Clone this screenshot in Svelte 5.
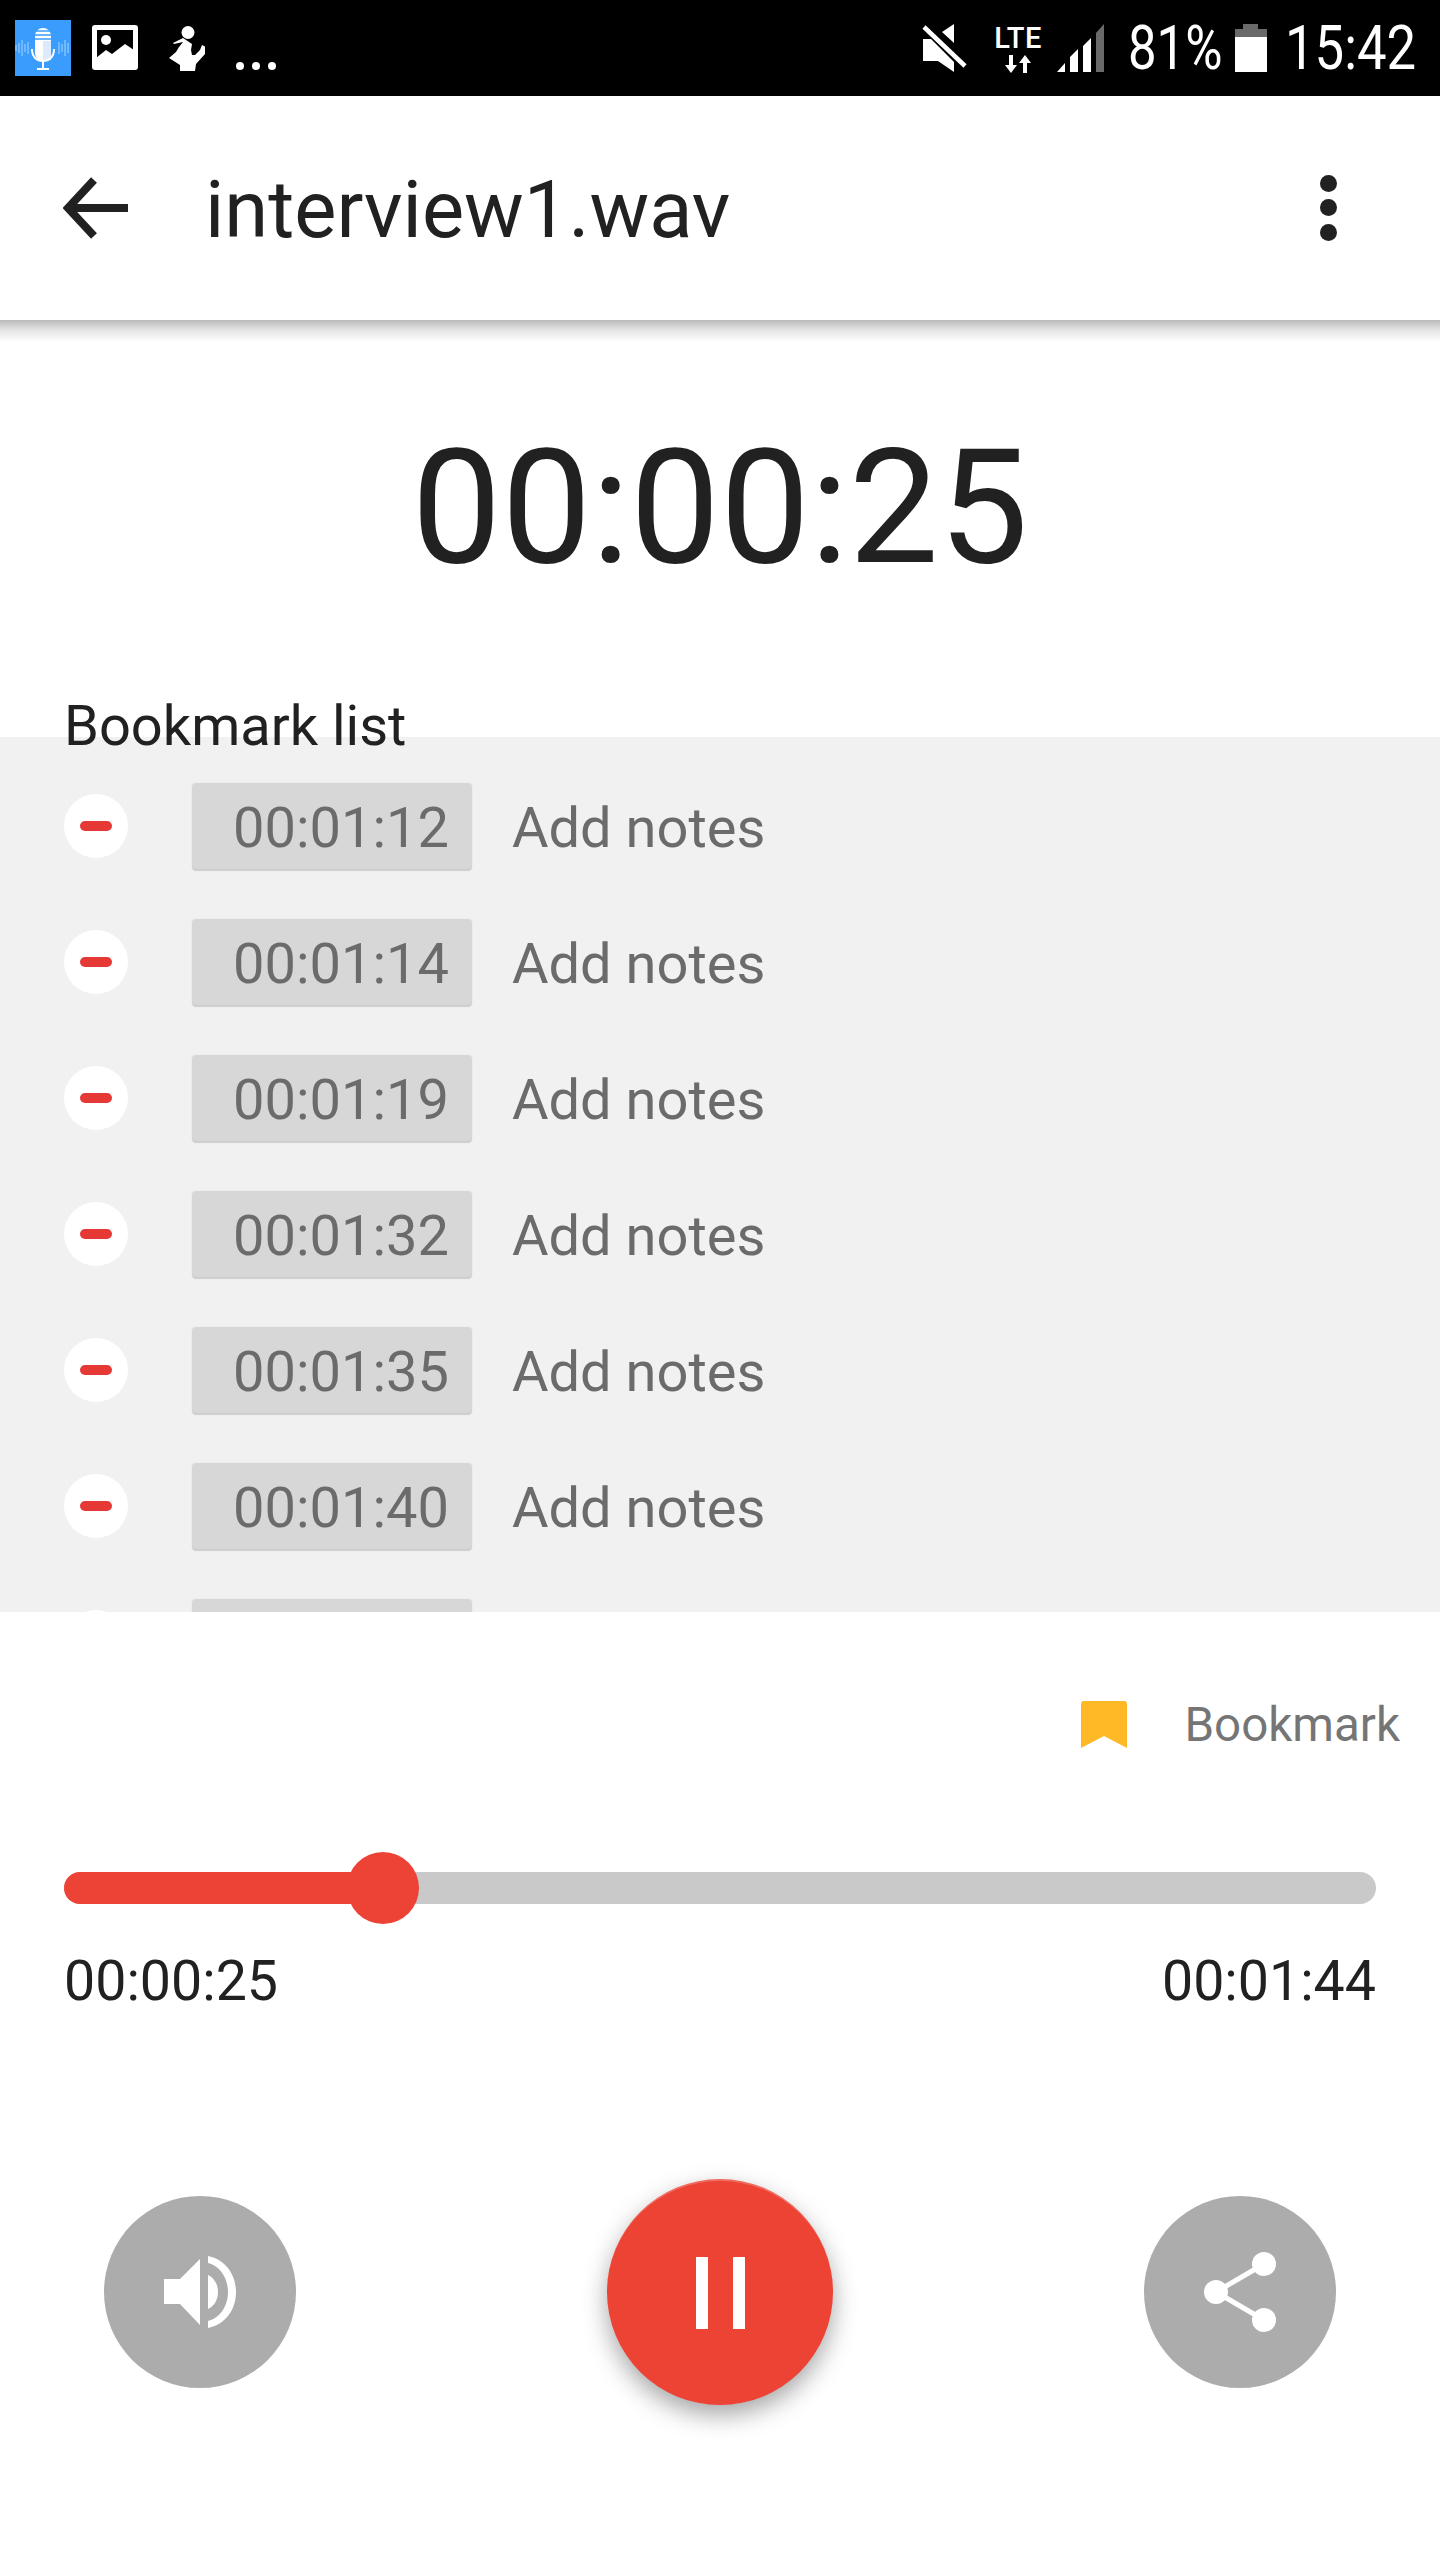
<script>
	const marks = ['00:01:12', '00:01:14', '00:01:19', '00:01:32', '00:01:35', '00:01:40', ''];
</script>

<div class="screen">
	<div class="status">
		<div class="notif">
			<svg class="mic" width="56" height="56" viewBox="0 0 56 56">
				<rect width="56" height="56" fill="#3a9dfd" />
				<path d="M1 25v6M4 23v10M7 20v16M10 24v8M13 22v12M44 22v12M47 24v8M50 20v16M53 23v10" stroke="#a9d3fd" stroke-width="1" />
				<path d="M20 16a8 8 0 0 1 16 0v17a8 8 0 0 1-16 0z" fill="#fff" />
				<path d="M20 11h16M20 15h16M20 19h16" stroke="#3a9dfd" stroke-width="1.4" />
				<rect x="28" y="21" width="8" height="19" fill="#dbeafc" />
				<path d="M17 29c0 8 5 12 11 12s11-4 11-12" fill="none" stroke="#fff" stroke-width="2" />
				<path d="M28 41v8M22 49h12" stroke="#fff" stroke-width="2" />
			</svg>
			<svg class="pic" width="46" height="45" viewBox="0 0 46 45">
				<rect width="46" height="45" rx="3" fill="#fff" />
				<rect x="5" y="5" width="36" height="29" fill="#000" />
				<circle cx="14" cy="15" r="5" fill="#fff" />
				<path d="M4 33l10-8 6 4 13-10 9 6v12H4z" fill="#fff" />
			</svg>
			<svg class="runner" width="36" height="46" viewBox="0 0 36 46">
				<circle cx="19" cy="7.5" r="6.5" fill="#fff" />
				<path d="M14 13L4 18l1 1 9-2-4 5-3 5-7 6 11 7v6h15l1-7 9-10 1-7-4-2-2 5-5 5-3 0-1-5 1-6z" fill="#fff" />
			</svg>
			<div class="dots"><i></i><i></i><i></i></div>
		</div>
		<div class="system">
			<svg class="mute" width="45" height="48" viewBox="0 0 45 48">
				<path d="M32 0v19L20 8zM1 15h8l23 23v10L16 37H1z" fill="#fff" />
				<path d="M2 3l41 39" stroke="#fff" stroke-width="4.5" />
			</svg>
			<div class="lte">
				<span>LTE</span>
				<svg width="30" height="18" viewBox="0 0 30 18">
					<path d="M6 0h4v10h4l-6 8-6-8h4zM20 18h4V8h4l-6-8-6 8h4z" fill="#fff" />
				</svg>
			</div>
			<svg class="signal" width="48" height="48" viewBox="0 0 48 48">
				<path d="M0 48l8-9v9zM13 48V33l8-8v23zM26 48V22l8-8v34z" fill="#fff" />
				<path d="M39 48V9l8-9v48z" fill="#6a6a6a" />
			</svg>
			<span class="stat-text pct">81%</span>
			<svg class="battery" width="32" height="48" viewBox="0 0 32 48">
				<path d="M8 0h15v5h9v8H0V5h8z" fill="#6a6a6a" />
				<rect y="13" width="32" height="35" fill="#fff" />
			</svg>
			<span class="stat-text clock">15:42</span>
		</div>
	</div>

	<header class="toolbar">
		<svg class="back" width="66" height="62" viewBox="0 0 66 62">
			<path d="M65 31H7M31 3L5 31l26 28" fill="none" stroke="#212121" stroke-width="8" />
		</svg>
		<span class="title">interview1.wav</span>
		<div class="more"><i></i><i></i><i></i></div>
	</header>

	<div class="timer">00:00:25</div>

	<div class="list-title">Bookmark list</div>
	<div class="list">
		{#each marks as mark}
			<div class="row">
				<div class="remove"><i></i></div>
				<div class="chip">{mark}</div>
				{#if mark}<span class="notes">Add notes</span>{/if}
			</div>
		{/each}
	</div>

	<div class="bookmark">
		<svg width="46" height="47" viewBox="0 0 46 47">
			<path d="M3 0h40a3 3 0 0 1 3 3v44l-23-12L0 47V3a3 3 0 0 1 3-3z" fill="#ffb927" />
		</svg>
		<span>Bookmark</span>
	</div>

	<div class="slider">
		<div class="track">
			<div class="fill" style="width: {319}px"></div>
			<div class="thumb"></div>
		</div>
		<div class="times">
			<span>00:00:25</span>
			<span>00:01:44</span>
		</div>
	</div>

	<div class="controls">
		<button class="round">
			<svg width="72" height="72" viewBox="0 0 72 72">
				<path d="M0 23h16L36 3v66L16 48H0z" fill="#fff" />
				<path d="M44 0c16 3 28 17 28 36S60 69 44 72v-7c12-3 20-15 20-29S56 10 44 7z" fill="#fff" />
				<path d="M44 19c6 3 10 9 10 17s-4 14-10 17z" fill="#fff" />
			</svg>
		</button>
		<button class="round play">
			<i></i><i></i>
		</button>
		<button class="round">
			<svg width="72" height="80" viewBox="0 0 72 80">
				<path d="M60 12L12 40l48 28" fill="none" stroke="#fff" stroke-width="5" />
				<circle cx="60" cy="12" r="12" fill="#fff" />
				<circle cx="12" cy="40" r="12" fill="#fff" />
				<circle cx="60" cy="68" r="12" fill="#fff" />
			</svg>
		</button>
	</div>
</div>

<style>
	:global(body) {
		margin: 0;
		background: #fff;
	}

	.screen {
		width: 1440px;
		height: 2560px;
		display: flex;
		flex-direction: column;
		overflow: hidden;
		font-family: Roboto, "Liberation Sans", sans-serif;
		color: #212121;
		background: #fff;
	}

	.status {
		height: 96px;
		flex-shrink: 0;
		background: #000;
		display: flex;
		justify-content: space-between;
		color: #fff;
	}

	.notif {
		display: flex;
		padding-left: 15px;
	}

	.mic {
		margin-top: 20px;
	}

	.pic {
		margin: 25px 0 0 21px;
	}

	.runner {
		margin: 25px 0 0 31px;
	}

	.dots {
		display: flex;
		gap: 8px;
		margin: 62px 0 0 31px;
	}

	.dots i {
		width: 8px;
		height: 8px;
		border-radius: 50%;
		background: #fff;
	}

	.system {
		display: flex;
		align-items: flex-start;
		padding: 24px 25px 0 0;
	}

	.lte {
		width: 50px;
		margin-left: 26px;
		display: flex;
		flex-direction: column;
		align-items: center;
		font-size: 29px;
		font-weight: 500;
		line-height: 28px;
		letter-spacing: 0.5px;
		gap: 3px;
	}

	.lte svg {
		display: block;
	}

	.signal {
		margin-left: 14px;
	}

	.stat-text {
		font-size: 62px;
		font-weight: 400;
		line-height: 48px;
		transform: scaleX(0.82);
		transform-origin: left center;
		white-space: nowrap;
	}

	.pct {
		width: 107px;
		margin-left: 23px;
	}

	.battery {
		margin-right: 18px;
	}

	.clock {
		width: 130px;
		transform: scaleX(0.85);
	}

	.toolbar {
		height: 224px;
		flex-shrink: 0;
		display: flex;
		align-items: center;
		padding: 0 0 0 63px;
		background: #fff;
		position: relative;
		z-index: 1;
	}

	/* Toolbar's drop shadow is a hard-edged ramp, not a soft blur */
	.toolbar::after {
		content: '';
		position: absolute;
		left: 0;
		right: 0;
		top: 100%;
		height: 22px;
		background: linear-gradient(to bottom, #bababa, #e4e4e4 45%, #fff);
	}

	.back {
		margin-top: -1px;
	}

	.title {
		margin-left: 76px;
		padding-top: 4px;
		font-size: 79.5px;
		line-height: 1;
		color: #212121;
	}

	.more {
		margin-left: auto;
		margin-right: 103px;
		display: flex;
		flex-direction: column;
		gap: 7.5px;
		margin-top: -1px;
	}

	.more i {
		width: 17px;
		height: 17px;
		border-radius: 50%;
		background: #212121;
	}

	.timer {
		height: 380px;
		flex-shrink: 0;
		text-align: center;
		font-size: 160px;
		font-weight: 400;
		line-height: 376px;
		color: #212121;
	}

	.list-title {
		height: 54px;
		margin: 0 0 -17px 64px;
		font-size: 56px;
		line-height: 53px;
		position: relative;
		z-index: 1;
	}

	.list {
		height: 875px;
		flex-shrink: 0;
		overflow: hidden;
		background: #f1f1f1;
		padding-top: 46px;
		box-sizing: border-box;
	}

	.row {
		height: 86px;
		margin-bottom: 50px;
		display: flex;
		align-items: center;
		padding-left: 64px;
	}

	.remove {
		width: 64px;
		height: 64px;
		border-radius: 50%;
		background: #fff;
		display: flex;
		align-items: center;
		justify-content: center;
		flex-shrink: 0;
	}

	.remove i {
		width: 32px;
		height: 10px;
		border-radius: 5px;
		background: #e53935;
	}

	.chip {
		width: 280px;
		height: 86px;
		margin-left: 64px;
		padding-right: 23px;
		box-sizing: border-box;
		border-radius: 4px;
		background: #d7d7d7;
		box-shadow: 0 2px 1px rgba(0, 0, 0, 0.14), 0 0 2px rgba(0, 0, 0, 0.05);
		text-align: right;
		font-size: 56px;
		line-height: 90px;
		color: #6b6b6b;
		flex-shrink: 0;
		margin-top: -1px;
	}

	.notes {
		margin-left: 40px;
		padding-top: 3px;
		font-size: 56px;
		color: #6b6b6b;
	}

	.bookmark {
		height: 47px;
		margin-top: 89px;
		padding-right: 40px;
		display: flex;
		justify-content: flex-end;
		align-items: center;
		font-size: 47.5px;
		color: #757575;
	}

	.bookmark svg {
		margin-right: 57px;
	}

	.slider {
		margin-top: 124px;
		padding: 0 64px;
	}

	.track {
		height: 32px;
		border-radius: 16px;
		background: #c9c9c9;
		position: relative;
	}

	.fill {
		height: 32px;
		border-radius: 16px 0 0 16px;
		background: #ed4336;
	}

	.thumb {
		position: absolute;
		left: 283px;
		top: -20px;
		width: 72px;
		height: 72px;
		border-radius: 50%;
		background: #ed4336;
	}

	.times {
		display: flex;
		justify-content: space-between;
		margin-top: 43px;
		font-size: 55.5px;
		line-height: 70px;
		color: #212121;
	}

	.controls {
		margin-top: 162px;
		height: 226px;
		padding: 0 104px;
		display: flex;
		justify-content: space-between;
		align-items: center;
	}

	.round {
		width: 192px;
		height: 192px;
		border: none;
		padding: 0;
		border-radius: 50%;
		background: #acacac;
		display: flex;
		align-items: center;
		justify-content: center;
	}

	.play {
		width: 226px;
		height: 226px;
		gap: 25px;
		background: #ec4335;
		border-top: 2px solid #f0695e;
		box-shadow: 0 10px 24px rgba(0, 0, 0, 0.35);
	}

	.play i {
		width: 12px;
		height: 72px;
		background: #fff;
	}
</style>
